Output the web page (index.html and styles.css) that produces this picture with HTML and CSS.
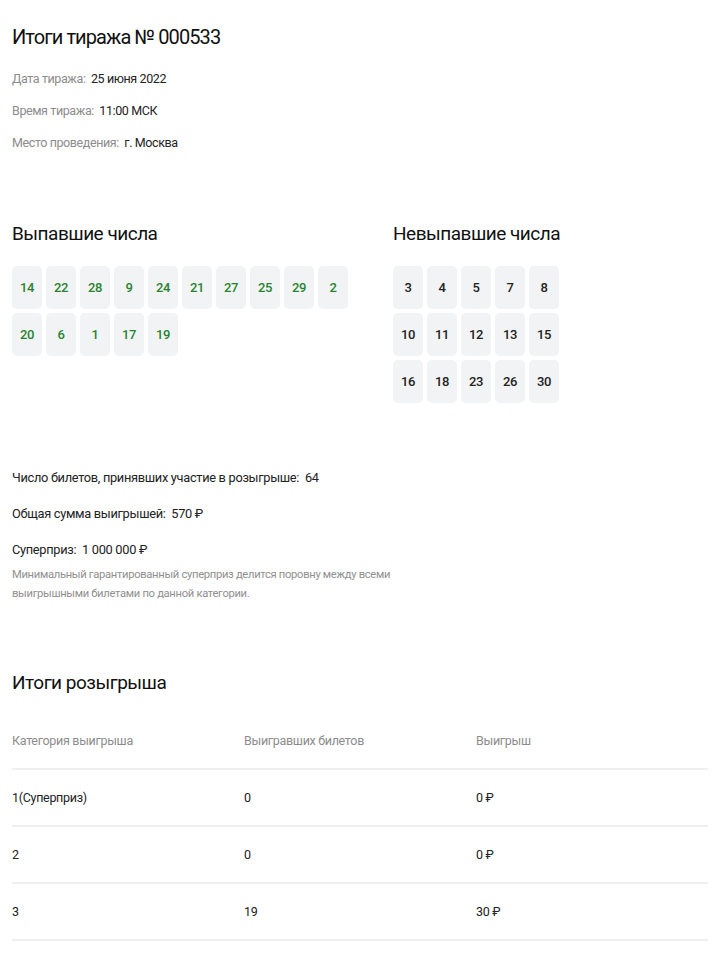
FILE: index.html
```html
<!DOCTYPE html>
<html lang="ru">
<head>
<meta charset="utf-8">
<title>Итоги тиража № 000533</title>
<link rel="stylesheet" href="styles.css">
</head>
<body>
<div class="page">
  <h1 class="title">Итоги тиража № 000533</h1>
  <div class="info">
    <div class="info-row"><span class="label">Дата тиража:</span>&nbsp; <span class="value">25 июня 2022</span></div>
    <div class="info-row"><span class="label">Время тиража:</span>&nbsp; <span class="value">11:00 МСК</span></div>
    <div class="info-row"><span class="label">Место проведения:</span>&nbsp; <span class="value">г. Москва</span></div>
  </div>

  <div class="numbers">
    <div class="num-col num-col-left">
      <h2 class="subtitle">Выпавшие числа</h2>
      <div class="grid grid-10">
        <div class="ball win">14</div><div class="ball win">22</div><div class="ball win">28</div><div class="ball win">9</div><div class="ball win">24</div>
        <div class="ball win">21</div><div class="ball win">27</div><div class="ball win">25</div><div class="ball win">29</div><div class="ball win">2</div>
        <div class="ball win">20</div><div class="ball win">6</div><div class="ball win">1</div><div class="ball win">17</div><div class="ball win">19</div>
      </div>
    </div>
    <div class="num-col">
      <h2 class="subtitle">Невыпавшие числа</h2>
      <div class="grid grid-5">
        <div class="ball">3</div><div class="ball">4</div><div class="ball">5</div><div class="ball">7</div><div class="ball">8</div>
        <div class="ball">10</div><div class="ball">11</div><div class="ball">12</div><div class="ball">13</div><div class="ball">15</div>
        <div class="ball">16</div><div class="ball">18</div><div class="ball">23</div><div class="ball">26</div><div class="ball">30</div>
      </div>
    </div>
  </div>

  <div class="stats">
    <p class="stat">Число билетов, принявших участие в розыгрыше:&nbsp; 64</p>
    <p class="stat">Общая сумма выигрышей:&nbsp; 570 ₽</p>
    <p class="stat stat-last">Суперприз:&nbsp; 1 000 000 ₽</p>
    <p class="note">Минимальный гарантированный суперприз делится поровну между всеми<br>выигрышными билетами по данной категории.</p>
  </div>

  <h2 class="subtitle results-title">Итоги розыгрыша</h2>
  <div class="table">
    <div class="row head"><div class="cell">Категория выигрыша</div><div class="cell">Выигравших билетов</div><div class="cell">Выигрыш</div></div>
    <div class="row"><div class="cell">1(Суперприз)</div><div class="cell">0</div><div class="cell">0 ₽</div></div>
    <div class="row"><div class="cell">2</div><div class="cell">0</div><div class="cell">0 ₽</div></div>
    <div class="row"><div class="cell">3</div><div class="cell">19</div><div class="cell">30 ₽</div></div>
  </div>
</div>
</body>
</html>
```
FILE: styles.css
```css
* { box-sizing: border-box; }
html, body { margin: 0; padding: 0; background: #fff; }
body {
  font-family: Roboto, "Noto Sans", sans-serif;
  color: #1c1c1c;
}
.page { padding: 23px 12px 0; }

.title {
  margin: 0;
  font-size: 20px;
  line-height: 28px;
  font-weight: 400;
  color: #111;
  letter-spacing: -0.9px;
}
.info { margin-top: 12px; }
.info-row {
  font-size: 12.5px;
  line-height: 32px;
  letter-spacing: -0.4px;
}
.label { color: #8c8c8c; }
.value { color: #222; }

.numbers {
  display: flex;
  margin-top: 61px;
}
.num-col-left { width: 381px; }
.subtitle {
  margin: 0;
  font-size: 19px;
  line-height: 28px;
  font-weight: 400;
  color: #111;
  letter-spacing: -0.5px;
}
.grid {
  display: grid;
  gap: 4px;
  margin-top: 18px;
  grid-auto-rows: 43px;
}
.grid-10 { grid-template-columns: repeat(10, 30px); }
.grid-5 { grid-template-columns: repeat(5, 30px); }
.ball {
  background: #f2f3f5;
  border-radius: 5px;
  display: flex;
  align-items: center;
  justify-content: center;
  font-size: 13px;
  font-weight: 500;
  color: #222;
  letter-spacing: -0.4px;
}
.ball.win { color: #27832f; }

.stats { margin-top: 65px; }
.stat {
  margin: 0 0 16px;
  font-size: 12.8px;
  line-height: 20px;
  color: #222;
  letter-spacing: -0.3px;
}
.stat.stat-last { margin-bottom: 5px; }
.note {
  margin: 0;
  font-size: 11.2px;
  line-height: 19px;
  color: #8f8f8f;
  letter-spacing: -0.3px;
}

.results-title { margin-top: 66px; }
.table { margin-top: 16px; }
.row {
  display: grid;
  grid-template-columns: 1fr 1fr 1fr;
  height: 57px;
  align-items: center;
  border-bottom: 2px solid #f0f0f4;
  font-size: 12.5px;
  color: #222;
  letter-spacing: -0.3px;
}
.row.head { color: #8c8c8c; }
```
